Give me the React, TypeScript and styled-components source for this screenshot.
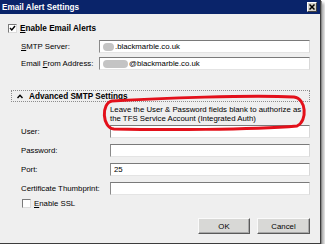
import React from 'react';
import styled, { createGlobalStyle } from 'styled-components';

const GlobalStyle = createGlobalStyle`
  body {
    margin: 0;
    background: #ffffff;
    font-family: "Liberation Sans", Arial, sans-serif;
    font-size: 7.8px;
    color: #000;
  }
`;

const Window = styled.div`
  position: relative;
  box-sizing: border-box;
  width: 321px;
  height: 244px;
  display: flex;
  flex-direction: column;
  background: #efefef;
  border-right: 1px solid #3c3c3c;
  border-bottom: 1px solid #3c3c3c;
  box-shadow: 1px 1px 0 #8a8a8a, 3px 3px 3px rgba(0, 0, 0, 0.35);
`;

const TitleBar = styled.div`
  height: 14px;
  display: flex;
  align-items: center;
  justify-content: space-between;
  padding: 0 3px 0 2px;
  background: #0a246a;
  color: #fff;
  font-weight: bold;
  font-size: 8.2px;
`;

const CloseButton = styled.div`
  box-sizing: border-box;
  width: 10px;
  height: 10px;
  display: flex;
  align-items: center;
  justify-content: center;
  background: #d4d0c8;
  border-top: 1px solid #fff;
  border-left: 1px solid #fff;
  border-right: 1px solid #404040;
  border-bottom: 1px solid #404040;
`;

const Content = styled.div`
  flex: 1;
  display: flex;
  flex-direction: column;
  padding: 9px 10px 9px 8px;
`;

const CheckRow = styled.label<{ indent?: number }>`
  display: flex;
  align-items: center;
  gap: 3px;
  height: 10px;
  margin-left: ${(p) => p.indent ?? 0}px;
  font-weight: ${(p) => (p.indent ? 'normal' : 'bold')};
  font-size: ${(p) => (p.indent ? '7.8px' : '8.2px')};
`;

const Box = styled.span`
  box-sizing: border-box;
  width: 9px;
  height: 9px;
  display: flex;
  align-items: center;
  justify-content: center;
  background: #fff;
  border-top: 1px solid #7a7a7a;
  border-left: 1px solid #7a7a7a;
  border-right: 1px solid #dcdcdc;
  border-bottom: 1px solid #dcdcdc;
`;

const Fields = styled.div<{ gap: number; top: number }>`
  display: flex;
  flex-direction: column;
  gap: ${(p) => p.gap}px;
  margin: ${(p) => p.top}px 0 0 13px;
`;

const Row = styled.div<{ labelWidth: number }>`
  display: grid;
  grid-template-columns: ${(p) => p.labelWidth}px 1fr;
  align-items: center;
  height: 13px;
`;

const Input = styled.div`
  box-sizing: border-box;
  height: 13px;
  display: flex;
  align-items: center;
  padding-left: 3px;
  background: #fff;
  border-top: 1px solid #7a7a7a;
  border-left: 1px solid #8a8a8a;
  border-right: 1px solid #d8d8d8;
  border-bottom: 1px solid #e4e4e4;
`;

const Redacted = styled.span<{ w: number }>`
  display: inline-block;
  width: ${(p) => p.w}px;
  height: 8px;
  margin-right: 1px;
  border-radius: 4px;
  background: #c4c4c4;
`;

const SectionHeader = styled.div`
  box-sizing: border-box;
  height: 12px;
  margin: 20px 0 0 3px;
  display: flex;
  align-items: center;
  gap: 6px;
  padding-left: 5px;
  border: 1px dotted #8c8c8c;
  font-weight: bold;
  font-size: 8.2px;
`;

const Note = styled.div`
  margin: 4px 0 0 102px;
  line-height: 8.6px;
`;

const Buttons = styled.div`
  margin-top: auto;
  display: flex;
  justify-content: flex-end;
  gap: 7px;
  padding-right: 0;
`;

const Button = styled.div<{ w: number }>`
  box-sizing: border-box;
  width: ${(p) => p.w}px;
  height: 16px;
  display: flex;
  align-items: center;
  justify-content: center;
  background: #d8d8d6;
  border-top: 1px solid #fafafa;
  border-left: 1px solid #fafafa;
  border-right: 1px solid #5a5a5a;
  border-bottom: 1px solid #5a5a5a;
  box-shadow: inset -1px -1px 0 #a8a8a8;
`;

const Annotation = styled.svg`
  position: absolute;
  left: 100px;
  top: 94px;
  pointer-events: none;
`;

const Tick = () => (
  <svg width="7" height="7" viewBox="0 0 7 7">
    <polyline points="1,3 2.8,5 6,1" fill="none" stroke="#000" strokeWidth="1.4" />
  </svg>
);

export default function App() {
  return (
    <>
      <GlobalStyle />
      <Window>
        <TitleBar>
          <span>Email Alert Settings</span>
          <CloseButton>
            <svg width="6" height="6" viewBox="0 0 6 6">
              <path d="M0.5 0.5 L5.5 5.5 M5.5 0.5 L0.5 5.5" stroke="#000" strokeWidth="1.5" />
            </svg>
          </CloseButton>
        </TitleBar>
        <Content>
          <CheckRow>
            <Box><Tick /></Box>
            <span><u>E</u>nable Email Alerts</span>
          </CheckRow>
          <Fields gap={4} top={7}>
            <Row labelWidth={78}>
              <span><u>S</u>MTP Server:</span>
              <Input><Redacted w={11} />.blackmarble.co.uk</Input>
            </Row>
            <Row labelWidth={78}>
              <span>Email <u>F</u>rom Address:</span>
              <Input><Redacted w={25} />@blackmarble.co.uk</Input>
            </Row>
          </Fields>
          <SectionHeader>
            <svg width="6" height="5" viewBox="0 0 6 5">
              <polyline points="0.5,4 3,1.3 5.5,4" fill="none" stroke="#000" strokeWidth="1.4" />
            </svg>
            <span>Advanced SMTP Settings</span>
          </SectionHeader>
          <Note>
            Leave the User &amp; Password fields blank to authorize as
            <br />
            the TFS Service Account (Integrated Auth)
          </Note>
          <Fields gap={6} top={2}>
            <Row labelWidth={89}>
              <span>User:</span>
              <Input />
            </Row>
            <Row labelWidth={89}>
              <span>Password:</span>
              <Input />
            </Row>
            <Row labelWidth={89}>
              <span>Port:</span>
              <Input>25</Input>
            </Row>
            <Row labelWidth={89}>
              <span>Certificate Thumbprint:</span>
              <Input />
            </Row>
          </Fields>
          <CheckRow indent={14} style={{ marginTop: 3 }}>
            <Box />
            <span><u>E</u>nable SSL</span>
          </CheckRow>
          <Buttons>
            <Button w={52}>OK</Button>
            <Button w={53}>Cancel</Button>
          </Buttons>
        </Content>
        <Annotation width="212" height="40" viewBox="0 0 212 40">
          <path
            d="M12 7 C60 4 150 1 194 3 C206 4 208 27 197 32 C150 36 60 36 14 35 C2 34 1 9 12 7 Z"
            fill="none"
            stroke="#e3101a"
            strokeWidth="3"
          />
        </Annotation>
      </Window>
    </>
  );
}
